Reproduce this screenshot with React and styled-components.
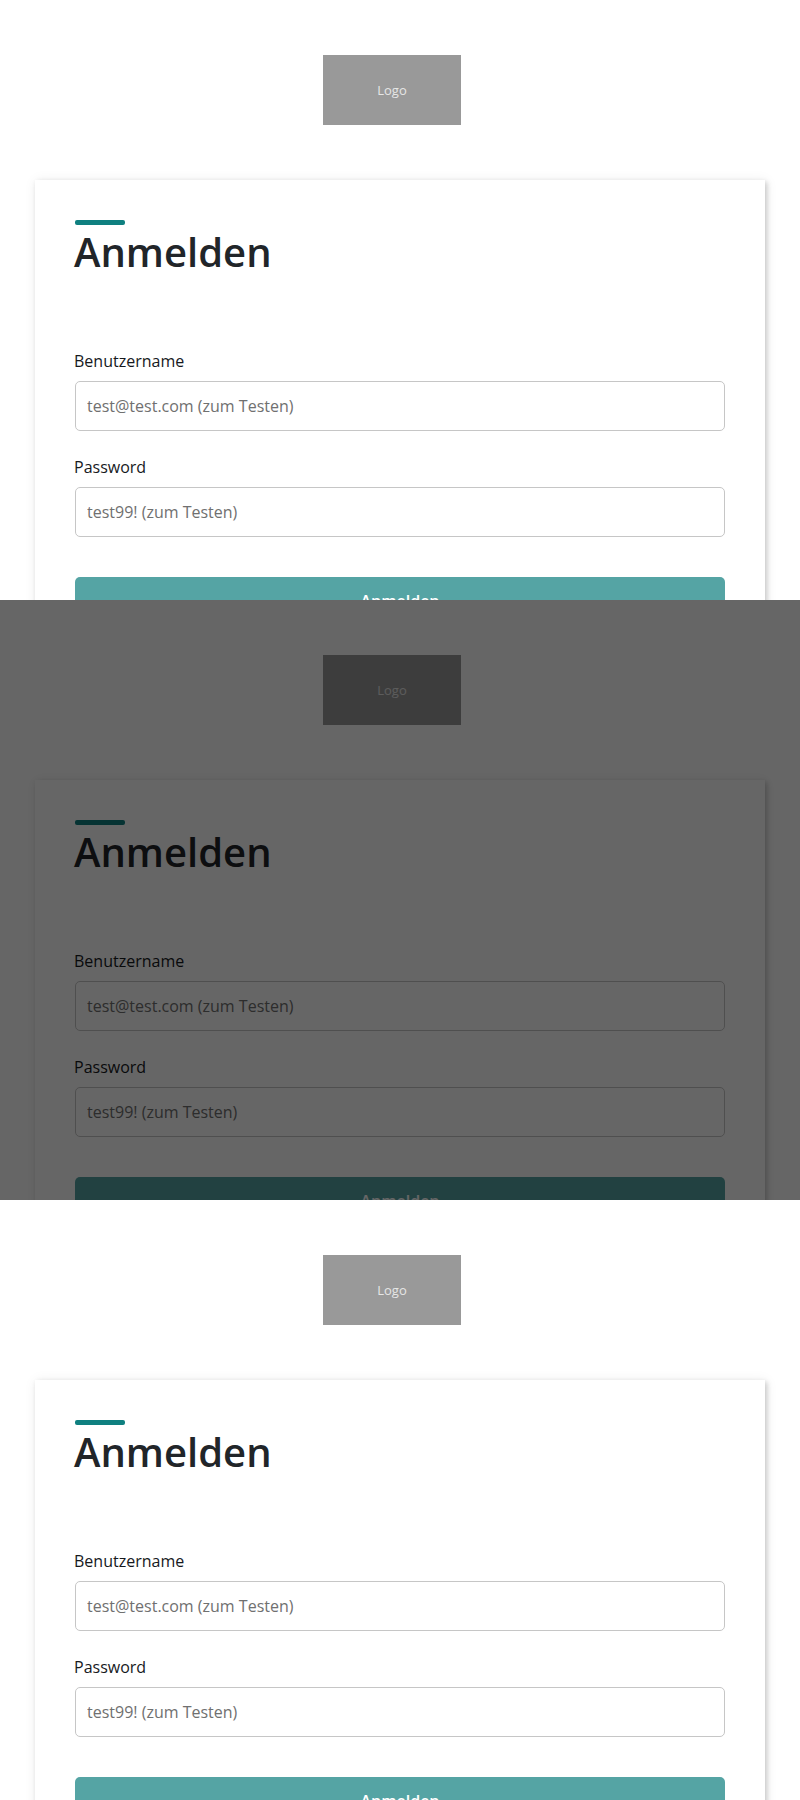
import React from "react";
import styled, { createGlobalStyle } from "styled-components";

const GlobalStyle = createGlobalStyle`
  *, *::before, *::after { box-sizing: border-box; }
  body {
    margin: 0;
    background: #fff;
    color: #212529;
    font-family: "Open Sans", sans-serif;
    font-size: 16px;
    line-height: 24px;
  }
`;

const Screen = styled.section`
  position: relative;
  height: 600px;
  padding: 55px 35px 0;
  overflow: hidden;
  background: #fff;
`;

const Overlay = styled.div`
  position: absolute;
  inset: 0;
  background: rgba(0, 0, 0, 0.6);
`;

const Logo = styled.div`
  display: flex;
  align-items: center;
  justify-content: center;
  width: 138px;
  height: 70px;
  margin: 0 0 55px 288px;
  background: #999;
  color: #e6e6e6;
  font-size: 13px;
`;

const Card = styled.form`
  height: 560px;
  padding: 40px;
  background: #fff;
  box-shadow: 2px 2px 5px rgba(0, 0, 0, 0.18), 1px 1px 12px rgba(0, 0, 0, 0.08);
`;

const Accent = styled.div`
  width: 50px;
  height: 5px;
  border-radius: 2px;
  background: #0f8080;
`;

const Title = styled.h1`
  margin: 3px 0 73px -1px;
  font-size: 40px;
  font-weight: 600;
  line-height: 48px;
`;

const Field = styled.label`
  display: block;
  margin-bottom: 24px;
`;

const FieldLabel = styled.span`
  display: block;
  height: 24px;
  margin: 0 0 8px -1px;
  color: #16191d;
`;

const Input = styled.input`
  display: block;
  width: 100%;
  height: 50px;
  padding: 0 11px;
  border: 1px solid #c6c6c6;
  border-radius: 5px;
  background: #fff;
  font: inherit;

  &::placeholder {
    color: #707070;
    opacity: 1;
  }
`;

const Submit = styled.button`
  display: block;
  width: 100%;
  height: 48px;
  margin-top: 40px;
  padding: 0;
  border: 0;
  border-radius: 5px;
  background: #55a4a4;
  color: #fff;
  font: inherit;
  font-weight: 600;
`;

function LoginScreen({ dimmed }) {
  return (
    <Screen>
      <Logo>Logo</Logo>
      <Card>
        <Accent />
        <Title>Anmelden</Title>
        <Field>
          <FieldLabel>Benutzername</FieldLabel>
          <Input type="text" placeholder="test@test.com (zum Testen)" />
        </Field>
        <Field>
          <FieldLabel>Password</FieldLabel>
          <Input type="password" placeholder="test99! (zum Testen)" />
        </Field>
        <Submit type="button">Anmelden</Submit>
      </Card>
      {dimmed && <Overlay />}
    </Screen>
  );
}

export default function App() {
  return (
    <>
      <GlobalStyle />
      <LoginScreen />
      <LoginScreen dimmed />
      <LoginScreen />
    </>
  );
}
